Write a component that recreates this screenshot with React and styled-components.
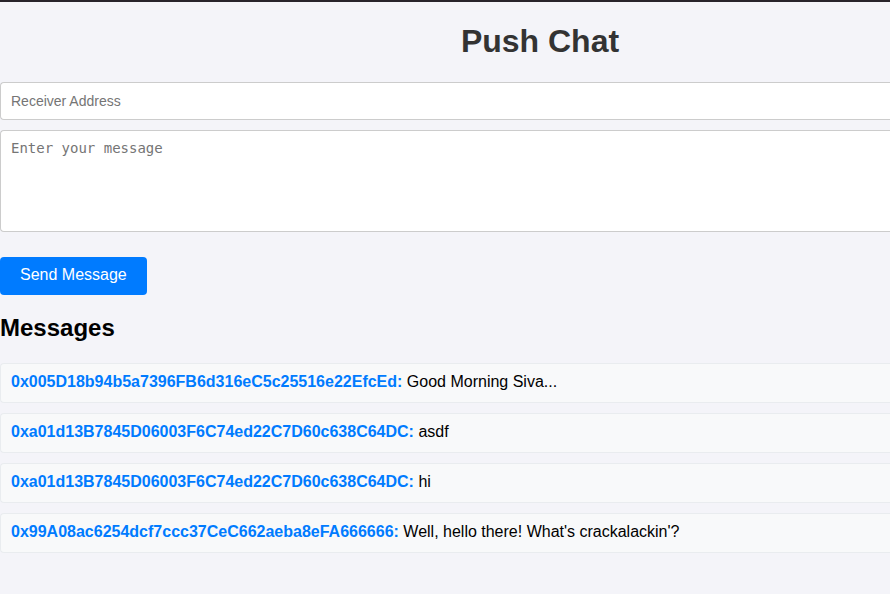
import React from "react";
import styled, { createGlobalStyle } from "styled-components";

const GlobalStyle = createGlobalStyle`
  * { box-sizing: border-box; }
  body {
    margin: 0;
    background: #f4f4f9;
    font-family: "Liberation Sans", Arial, sans-serif;
    font-size: 16px;
    color: #000;
  }
`;

const Page = styled.main`
  border-top: 2px solid #28242b;
`;

const Title = styled.h1`
  margin: 0;
  padding: 21px 0 22px 190px;
  font-size: 32px;
  line-height: 37px;
  text-align: center;
  color: #333;
`;

const Form = styled.form`
  display: flex;
  flex-direction: column;
  align-items: flex-start;
  gap: 10px;
`;

const AddressInput = styled.input`
  width: 100%;
  height: 38px;
  padding: 10px;
  border: 1px solid #ccc;
  border-right: 0;
  border-radius: 4px 0 0 4px;
  background: #fff;
  font: 14px "Liberation Sans", Arial, sans-serif;
`;

const MessageInput = styled.textarea`
  width: 100%;
  height: 102px;
  padding: 10px;
  border: 1px solid #ccc;
  border-right: 0;
  border-radius: 4px 0 0 4px;
  background: #fff;
  font: 14px/15px "DejaVu Sans Mono", monospace;
  resize: none;
`;

const SendButton = styled.button`
  margin-top: 15px;
  padding: 9px 20px 11px;
  border: 0;
  border-radius: 4px;
  background: #007bff;
  color: #fff;
  font: 16px/18px "Liberation Sans", Arial, sans-serif;
  cursor: pointer;
`;

const Heading = styled.h2`
  margin: 20px 0;
  padding-bottom: 2px;
  font-size: 24px;
  line-height: 26px;
`;

const MessageList = styled.ul`
  display: flex;
  flex-direction: column;
  gap: 10px;
  margin: 0;
  padding: 0;
  list-style: none;
`;

const Message = styled.li`
  padding: 10px 10px 12px;
  border: 1px solid #e9ecef;
  border-right: 0;
  border-radius: 4px 0 0 4px;
  background: #f8f9fa;
  line-height: 16px;
`;

const Sender = styled.strong`
  color: #007bff;
`;

const messages = [
  { from: "0x005D18b94b5a7396FB6d316eC5c25516e22EfcEd", text: "Good Morning Siva..." },
  { from: "0xa01d13B7845D06003F6C74ed22C7D60c638C64DC", text: "asdf" },
  { from: "0xa01d13B7845D06003F6C74ed22C7D60c638C64DC", text: "hi" },
  { from: "0x99A08ac6254dcf7ccc37CeC662aeba8eFA666666", text: "Well, hello there! What's crackalackin'?" },
];

export default function App() {
  return (
    <>
      <GlobalStyle />
      <Page>
        <Title>Push Chat</Title>
        <Form onSubmit={(event) => event.preventDefault()}>
          <AddressInput type="text" aria-label="Receiver Address" placeholder="Receiver Address" />
          <MessageInput aria-label="Message" placeholder="Enter your message" />
          <SendButton type="submit">Send Message</SendButton>
        </Form>
        <Heading>Messages</Heading>
        <MessageList>
          {messages.map((message, index) => (
            <Message key={index}>
              <Sender>{message.from}:</Sender> {message.text}
            </Message>
          ))}
        </MessageList>
      </Page>
    </>
  );
}
